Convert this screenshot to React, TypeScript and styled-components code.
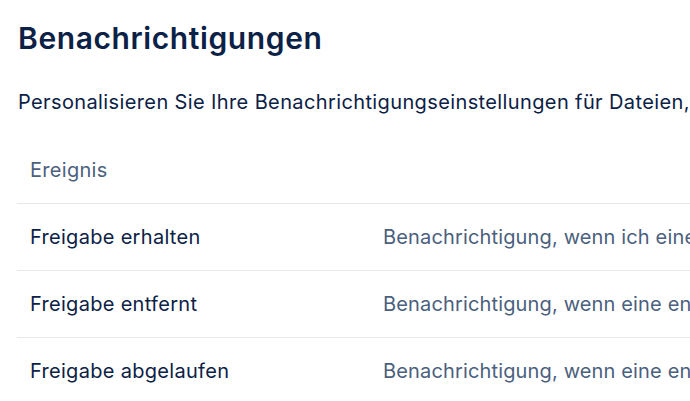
import React from 'react';
import styled, { createGlobalStyle } from 'styled-components';

const GlobalStyle = createGlobalStyle`
	html, body {
		margin: 0;
		padding: 0;
		background: #ffffff;
		overflow: hidden;
	}
	body {
		font-family: Inter, 'Noto Sans', sans-serif;
		color: #0c2146;
	}
`;

const Page = styled.div`
	padding: 18px 0 0 18px;
	width: 1200px;
`;

const Title = styled.h1`
	margin: 0;
	font-size: 30px;
	line-height: 40px;
	font-weight: 600;
	letter-spacing: 0.6px;
	color: #0c2146;
`;

const Lead = styled.p`
	margin: 30px 0 0;
	font-size: 20px;
	line-height: 28px;
	letter-spacing: 0.38px;
	white-space: nowrap;
	color: #0c2146;
`;

const Table = styled.table`
	margin: 21px 0 0 -1px;
	width: 1180px;
	border-collapse: collapse;
`;

const Cell = styled.td<{ $muted?: boolean; $head?: boolean }>`
	height: 66px;
	padding: 0 13px;
	font-size: 20px;
	letter-spacing: ${p => (p.$muted ? '0.15px' : '0.3px')};
	text-align: left;
	vertical-align: middle;
	white-space: nowrap;
	font-weight: 400;
	color: ${p => (p.$muted || p.$head ? '#4b5f7e' : '#0c2146')};
	border-bottom: 1px solid #e6e8ec;
	&:first-child {
		width: 327px;
	}
`;

const Row = styled.tr`
	&:last-child td {
		border-bottom: none;
	}
`;

type Event = {
	name: string;
	description: string;
};

const events: Event[] = [
	{
		name: 'Freigabe erhalten',
		description: 'Benachrichtigung, wenn ich eine Freigabe erhalte',
	},
	{
		name: 'Freigabe entfernt',
		description: 'Benachrichtigung, wenn eine entsprechende Freigabe entfernt wurde',
	},
	{
		name: 'Freigabe abgelaufen',
		description: 'Benachrichtigung, wenn eine entsprechende Freigabe abgelaufen ist',
	},
];

export default function App() {
	return (
		<>
			<GlobalStyle />
			<Page>
				<Title>Benachrichtigungen</Title>
				<Lead>
					Personalisieren Sie Ihre Benachrichtigungseinstellungen für Dateien, Ordner und Freigaben.
				</Lead>
				<Table>
					<thead>
						<Row>
							<Cell as="th" $head>
								Ereignis
							</Cell>
							<Cell as="th" $head />
						</Row>
					</thead>
					<tbody>
						{events.map(ev => (
							<Row key={ev.name}>
								<Cell>{ev.name}</Cell>
								<Cell $muted>{ev.description}</Cell>
							</Row>
						))}
					</tbody>
				</Table>
			</Page>
		</>
	);
}
